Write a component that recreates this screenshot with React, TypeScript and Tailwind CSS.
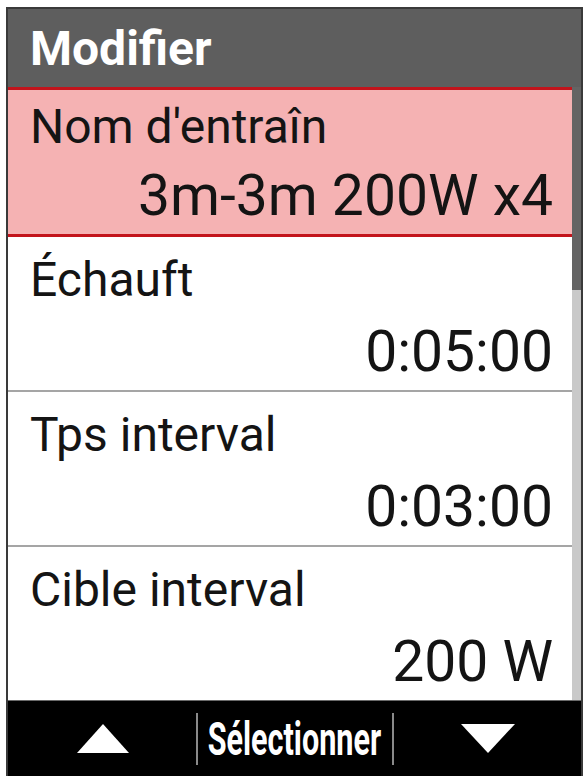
const rows = [
  { label: "Échauft", value: "0:05:00" },
  { label: "Tps interval", value: "0:03:00" },
  { label: "Cible interval", value: "200 W" },
];

function TriangleUp() {
  return (
    <svg width="52" height="29" viewBox="0 0 52 29">
      <polygon points="26,0 52,29 0,29" fill="#ffffff" />
    </svg>
  );
}

function TriangleDown() {
  return (
    <svg width="54" height="29" viewBox="0 0 54 29">
      <polygon points="0,0 54,0 27,29" fill="#ffffff" />
    </svg>
  );
}

export default function App() {
  return (
    <div className="w-[587px] h-[776px] bg-white overflow-hidden font-['Roboto',sans-serif]">
      <div className="ml-[6px] mt-[7px] w-[577px] h-[769px] border-x-2 border-t-2 border-[#3a3a3a] flex flex-col">
        {/* header */}
        <div className="h-[78px] shrink-0 bg-[#5e5e5e] pl-[22px] pt-[16px]">
          <span className="block text-[48px] leading-none font-bold text-white">Modifier</span>
        </div>

        {/* list + scrollbar */}
        <div className="flex h-[613px] shrink-0">
          <div className="flex-1 flex flex-col">
            <div className="h-[150px] bg-[#f5b2b3] border-y-[3px] border-[#c3141c] flex flex-col pl-[22px] pr-[19px] pt-[13px] pb-[10px]">
              <span className="text-[48px] leading-none text-[#141414]">Nom d'entraîn</span>
              <span className="mt-auto self-end text-[57px] leading-none text-[#141414]">3m-3m 200W x4</span>
            </div>
            {rows.map((r, i) => (
              <div
                key={r.label}
                className={
                  i < rows.length - 1
                    ? "h-[155px] border-b-2 border-[#a5a5a5] flex flex-col pl-[22px] pr-[19px] pt-[19px] pb-[10px]"
                    : "h-[153px] flex flex-col pl-[22px] pr-[19px] pt-[19px] pb-[10px]"
                }
              >
                <span className="text-[48px] leading-none text-[#141414]">{r.label}</span>
                <span className="mt-auto self-end text-[57px] leading-none text-[#141414]">{r.value}</span>
              </div>
            ))}
          </div>
          <div className="w-[9px] bg-[#c9c9c9] flex flex-col">
            <div className="h-[203px] bg-[#646464]" />
          </div>
        </div>

        {/* bottom bar */}
        <div className="flex-1 bg-black border-t border-[#6a6a6a] flex items-center">
          <div className="flex-1 flex justify-center pl-[2px]">
            <TriangleUp />
          </div>
          <div className="w-[2px] h-[52px] bg-[#8a8a8a]" />
          <div className="w-[194px] flex justify-center">
            <span className="inline-block whitespace-nowrap text-[47px] leading-none font-bold text-white scale-x-[0.65]">
              Sélectionner
            </span>
          </div>
          <div className="w-[2px] h-[52px] bg-[#8a8a8a]" />
          <div className="flex-1 flex justify-center pl-[2px]">
            <TriangleDown />
          </div>
        </div>
      </div>
    </div>
  );
}
